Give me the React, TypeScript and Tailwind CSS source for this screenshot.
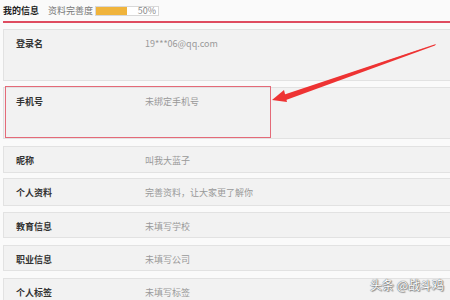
import React from "react";

const font = { fontFamily: '"Noto Sans CJK SC", "Liberation Sans", sans-serif' };

type Row = { label: string; value: string; h: number; mt: number };

const rows: Row[] = [
  { label: "登录名", value: "19***06@qq.com", h: 52, mt: 6 },
  { label: "手机号", value: "未绑定手机号", h: 52, mt: 6 },
  { label: "昵称", value: "叫我大蓝子", h: 27, mt: 7 },
  { label: "个人资料", value: "完善资料，让大家更了解你", h: 28, mt: 5 },
  { label: "教育信息", value: "未填写学校", h: 26, mt: 6 },
  { label: "职业信息", value: "未填写公司", h: 26, mt: 7 },
  { label: "个人标签", value: "未填写标签", h: 27, mt: 7 },
];

export default function App() {
  return (
    <div className="relative w-[450px] h-[300px] overflow-hidden bg-[#fafafa]" style={font}>
      {/* header */}
      <div className="flex items-center h-[21px] pl-[3px] text-[9px]">
        <span className="font-bold text-[#222] w-[45px]">我的信息</span>
        <span className="text-[#777]">资料完善度</span>
        <div className="ml-[2px] relative w-[64px] h-[10px] border border-[#d8d8d8] bg-white">
          <div className="absolute left-0 top-0 h-full w-[31px] bg-[#f0b43c]" />
          <span className="absolute right-[2px] top-[-3px] text-[9px] text-[#888] leading-[14px]">50%</span>
        </div>
      </div>
      <div className="ml-[3px] h-[2px] bg-[#d8203a] opacity-80" />
      {/* rows */}
      <div className="pl-[3px]">
        {rows.map((r, i) => (
          <div
            key={i}
            className="flex items-start w-[460px] bg-[#f2f2f2] border border-[#e2e2e2] text-[9px]"
            style={{ height: r.h, marginTop: r.mt }}
          >
            <span className="w-[141px] shrink-0 pl-[12px] leading-[27px] font-bold text-[#333]">{r.label}</span>
            <span className="leading-[27px] text-[#999]">{r.value}</span>
          </div>
        ))}
      </div>
      {/* red highlight box */}
      <div className="absolute left-[5px] top-[86px] w-[266px] h-[52px] border border-[#e46a78]" />
      {/* arrow */}
      <svg className="absolute left-0 top-0" width="450" height="300" viewBox="0 0 450 300">
        <polygon points="436,44 284,96 285,99 " fill="#f03a3a" opacity="0.5" />
        <polygon points="436,44 435,45.5 286,100 283,95" fill="#ee3333" />
        <polygon points="272,100 284,90 287,102" fill="#ee3333" />
      </svg>
      {/* watermark */}
      <div
        className="absolute left-[370px] top-[277px] whitespace-nowrap text-[12px] leading-[16px] text-white"
        style={{ textShadow: "0 0 1px #666, 0 0 1px #666, 1px 1px 1px #888" }}
      >
        头条 @战斗鸡
      </div>
    </div>
  );
}
